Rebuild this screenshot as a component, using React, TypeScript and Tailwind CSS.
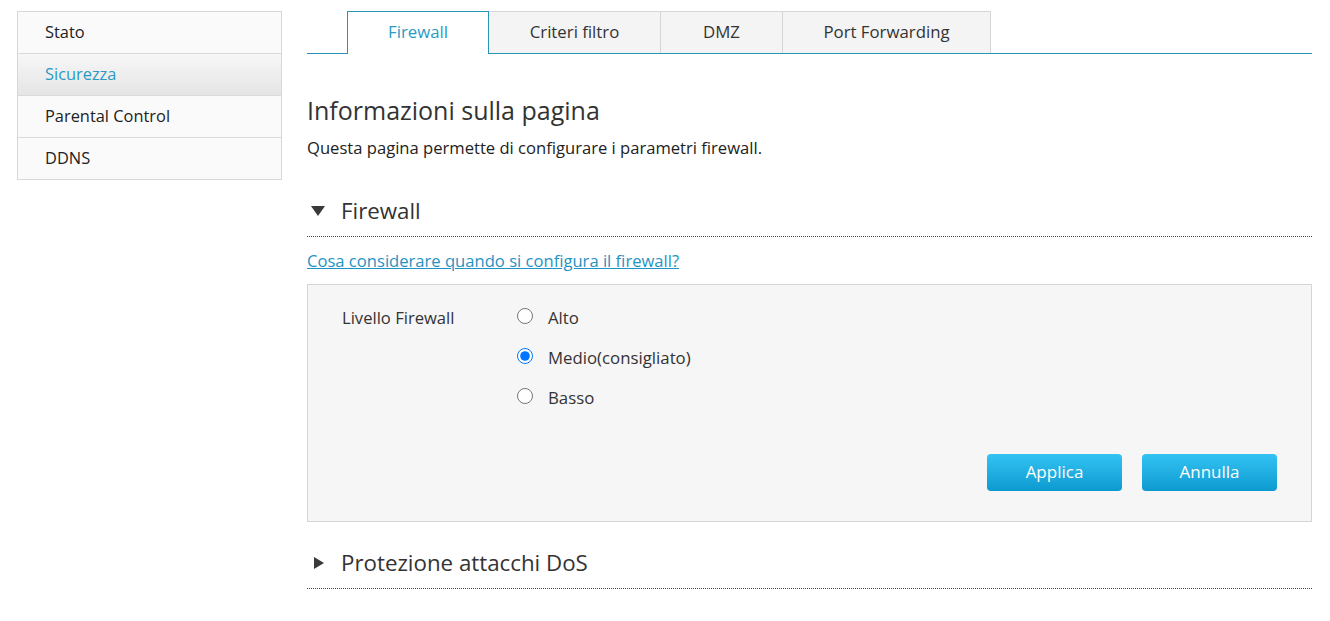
import { useState } from "react"

const MENU = ["Stato", "Sicurezza", "Parental Control", "DDNS"] as const

const TABS = [
  { label: "Firewall", width: "w-[142px]" },
  { label: "Criteri filtro", width: "w-[172px]" },
  { label: "DMZ", width: "w-[122px]" },
  { label: "Port Forwarding", width: "w-[208px]" },
] as const

const LEVELS = ["Alto", "Medio(consigliato)", "Basso"] as const

function Caret({ open }: { open: boolean }) {
  return open ? (
    <svg width="16" height="12" viewBox="0 0 16 12" className="mr-[15px] ml-[3px]">
      <polygon points="1,1 15,1 8,11" fill="#3a3a3a" />
    </svg>
  ) : (
    <svg width="16" height="14" viewBox="0 0 16 14" className="mr-[15px] ml-[3px]">
      <polygon points="4,1 14,7 4,13" fill="#3a3a3a" />
    </svg>
  )
}

function SectionHeader({ title, open }: { title: string; open: boolean }) {
  return (
    <div className="flex items-center border-b border-dotted border-[#444] pb-[10px]">
      <Caret open={open} />
      <span className="text-[22.3px] leading-[30px] text-[#333]">{title}</span>
    </div>
  )
}

export default function App() {
  const [level, setLevel] = useState<string>("Medio(consigliato)")

  return (
    <div
      className="flex min-h-[621px] bg-white pt-[11px] pr-[18px] pl-[17px] text-[#333]"
      style={{ fontFamily: '"Open Sans", "Noto Sans", sans-serif' }}
    >
      {/* side menu */}
      <aside className="w-[265px] shrink-0 self-start border border-[#d8d8d8] bg-[#fafafa]">
        {MENU.map((item, i) => (
          <div
            key={item}
            className={
              "flex items-center pb-px pl-[27px] text-[16.4px] " +
              (i > 0 ? "h-[42px] border-t border-[#dadada] " : "h-[41px] ") +
              (item === "Sicurezza"
                ? "bg-gradient-to-b from-[#f7f7f7] to-[#e5e5e5] text-[#2a9bc4]"
                : "text-[#222]")
            }
          >
            {item}
          </div>
        ))}
      </aside>

      <main className="ml-[25px] flex-1">
        {/* tabs */}
        <div className="flex h-[43px] border-b border-[#2a94b4] pl-[40px]">
          {TABS.map((tab, i) =>
            i === 0 ? (
              <div
                key={tab.label}
                className={`${tab.width} -mb-px flex h-[43px] items-center justify-center border-x border-t border-[#2a94b4] bg-white pb-[3px] text-[16.8px] text-[#2a9bc4]`}
              >
                {tab.label}
              </div>
            ) : (
              <div
                key={tab.label}
                className={`${tab.width} flex h-[42px] items-center justify-center border-t border-r border-[#d6d6d6] bg-[#f4f4f4] pb-[2px] text-[16.8px] text-[#333]`}
              >
                {tab.label}
              </div>
            )
          )}
        </div>

        <h1 className="mt-[40px] text-[25px] leading-[32px] text-[#333]">Informazioni sulla pagina</h1>
        <p className="mt-[11px] text-[16.6px] leading-[22px] text-[#222]">
          Questa pagina permette di configurare i parametri firewall.
        </p>

        <div className="mt-[37px]">
          <SectionHeader title="Firewall" open />
        </div>

        <a href="#" className="mt-[13px] block w-fit text-[16.6px] leading-[22px] text-[#1f93c3] underline">
          Cosa considerare quando si configura il firewall?
        </a>

        <div className="mt-[12px] border border-[#d5d5d5] bg-[#f6f6f6] pt-[22px] pr-[34px] pb-[30px] pl-[34px]">
          <div className="flex">
            <div className="w-[175px] text-[16.6px] leading-[22px] text-[#333]">Livello Firewall</div>
            <div className="flex flex-col gap-[18px]">
              {LEVELS.map((lv) => (
                <label key={lv} className="flex items-center text-[16.8px] leading-[22px] text-[#333]">
                  <input
                    type="radio"
                    name="level"
                    checked={level === lv}
                    onChange={() => setLevel(lv)}
                    className="m-0 h-4 w-4 -translate-y-[2px]"
                  />
                  <span className="ml-[15px]">{lv}</span>
                </label>
              ))}
            </div>
          </div>

          <div className="mt-[45px] flex justify-end gap-[20px]">
            {["Applica", "Annulla"].map((b) => (
              <button
                key={b}
                className="h-[37px] w-[135px] rounded-[4px] bg-gradient-to-b from-[#32c3f3] to-[#0a9ad0] pb-[2px] text-[17px] text-white"
              >
                {b}
              </button>
            ))}
          </div>
        </div>

        <div className="mt-[26px]">
          <SectionHeader title="Protezione attacchi DoS" open={false} />
        </div>
      </main>
    </div>
  )
}
